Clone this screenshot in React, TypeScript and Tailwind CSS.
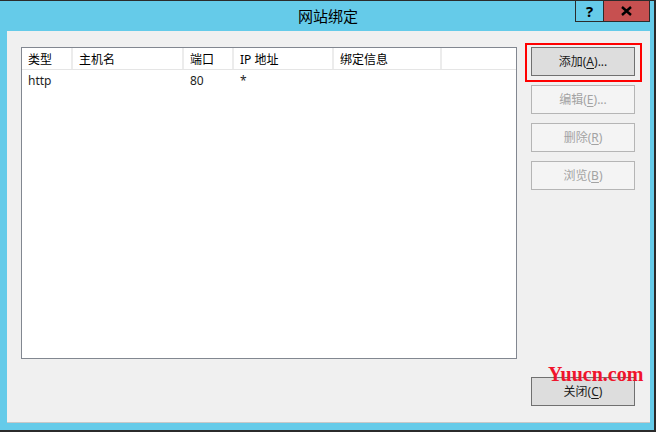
/**
 * 网站绑定 — IIS Site Bindings dialog
 */
const FONT = "font-['Noto_Sans','Noto_Sans_CJK_SC',sans-serif]";

const COLUMNS = [
  { label: '类型', w: 'w-[51px]' },
  { label: '主机名', w: 'w-[111px]' },
  { label: '端口', w: 'w-[50px]' },
  { label: 'IP 地址', w: 'w-[100px]' },
  { label: '绑定信息', w: 'w-[108px]' },
];

const ROWS = [['http', '', '80', '*', '']];

function Btn({ label, hotkey, suffix = '', disabled = false }: { label: string; hotkey: string; suffix?: string; disabled?: boolean }) {
  return (
    <button
      className={`w-[104px] h-[29px] border text-[12px] leading-none flex items-center justify-center
        ${disabled
          ? 'bg-[#f4f4f4] border-[#b5b5b5] text-[#a3a3a3]'
          : 'bg-[#dddddd] border-[#707070] text-[#1a1a1a]'}`}
    >
      {label}(<span className="underline underline-offset-2">{hotkey}</span>){suffix}
    </button>
  );
}

export default function App() {
  return (
    <div className={`w-[658px] h-[432px] bg-white ${FONT}`}>
      <div className="w-[656px] h-[432px] bg-[#65cbe9] border-t border-r-2 border-b-2 border-[#2b2b2b] flex flex-col">
        {/* Title bar */}
        <div className="relative h-[30px] flex items-center justify-center">
          <span className="text-[15px] text-black pl-[2px]">网站绑定</span>
          <div className="absolute top-[-1px] right-[4px] flex">
            <div className="w-[29px] h-[22px] border border-[#2b2b2b] flex items-center justify-center text-[15px] font-bold text-black">?</div>
            <div className="w-[46px] h-[22px] border border-l-0 border-[#2b2b2b] bg-[#c75050] flex items-center justify-center">
              <svg width="11" height="10" viewBox="0 0 11 10">
                <path d="M1 1 L10 9 M10 1 L1 9" stroke="#000" strokeWidth="2.4" />
              </svg>
            </div>
          </div>
        </div>

        {/* Client area */}
        <div className="ml-[7px] w-[643px] h-[392px] bg-[#f0f0f0] border-b border-[#c8c8c8] flex pt-[16px] pl-[14px]">
          {/* List view */}
          <div className="w-[496px] h-[312px] bg-white border border-[#828790]">
            <div className="flex h-[22px] border-b border-[#e5e5e5]">
              {COLUMNS.map((c) => (
                <div key={c.label} className={`${c.w} h-full border-r-2 border-[#ececec] flex items-center pl-[6px] pt-[2px] text-[12px] text-black`}>
                  {c.label}
                </div>
              ))}
            </div>
            {ROWS.map((r, i) => (
              <div key={i} className="flex h-[21px] items-center">
                {r.map((cell, j) => (
                  <div key={j} className={`${COLUMNS[j].w} pl-[6px] text-[12px] text-[#1e1e1e]`}>{cell}</div>
                ))}
              </div>
            ))}
          </div>

          {/* Buttons */}
          <div className="ml-[14px] flex flex-col justify-between pb-[16px]">
            <div className="flex flex-col gap-[9px]">
              <div className="relative">
                <Btn label="添加" hotkey="A" suffix="..." />
                <div className="absolute -left-[6px] -top-[4px] -right-[7px] -bottom-[6px] border-2 border-[#ff0000]" />
              </div>
              <Btn label="编辑" hotkey="E" suffix="..." disabled />
              <Btn label="删除" hotkey="R" disabled />
              <Btn label="浏览" hotkey="B" disabled />
            </div>
            <div className="relative">
              <Btn label="关闭" hotkey="C" />
              <span className="absolute -top-[13px] left-[17px] font-['Liberation_Serif',serif] font-bold text-[20px] leading-none text-[#f0142c]">
                Yuucn.com
              </span>
            </div>
          </div>
        </div>
      </div>
    </div>
  );
}
